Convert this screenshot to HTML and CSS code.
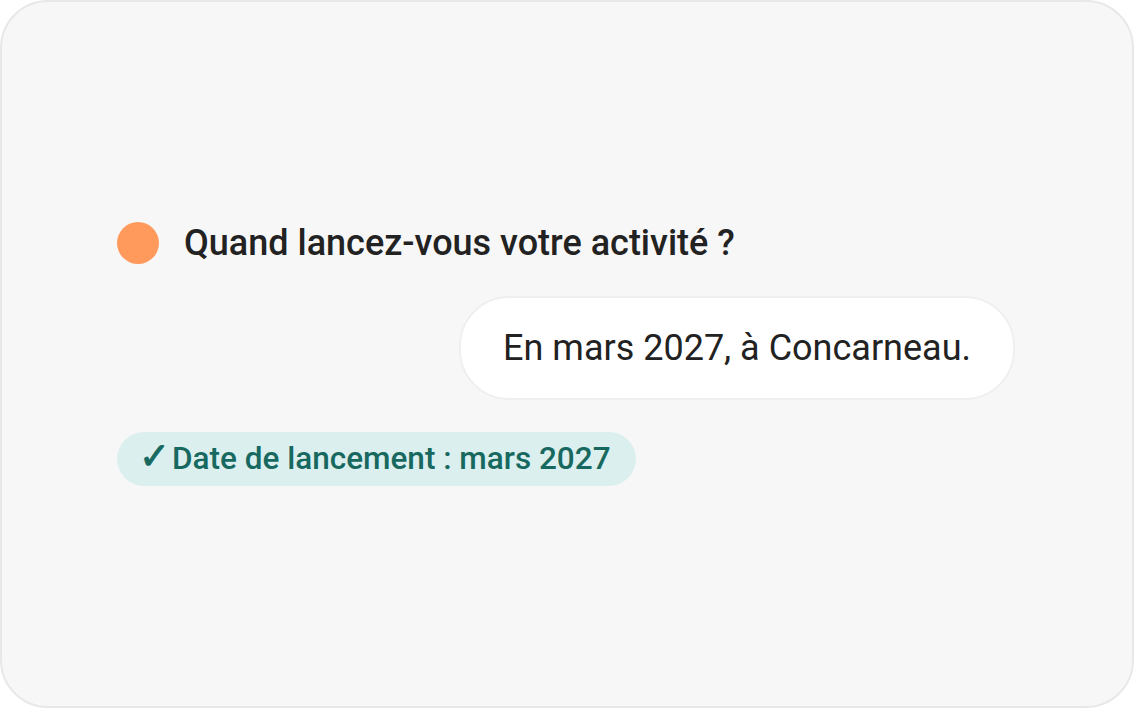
FILE: index.html
```html
<!DOCTYPE html>
<html lang="fr">
<head>
  <meta charset="UTF-8" />
  <meta name="viewport" content="width=device-width, initial-scale=1.0"/>
  <title>Date de lancement</title>
  <link rel="stylesheet" href="styles.css">
</head>
<body>
  <div class="card">
    <div class="question">
      <span class="dot"></span>
      <span class="question-text">Quand lancez-vous votre activité ?</span>
    </div>

    <div class="reply">En mars 2027, à Concarneau.</div>

    <div class="tag"><span class="check">✓</span>Date de lancement : mars 2027</div>
  </div>
</body>
</html>
```

FILE: styles.css
```css
html, body {
  margin: 0;
  background: #fff;
}

body {
  font-family: Roboto, "Noto Sans", sans-serif;
}

.card {
  box-sizing: border-box;
  width: 1134px;
  height: 708px;
  background: #f7f7f7;
  border: 2px solid #e8e8e8;
  border-radius: 48px;
  padding: 0 117px 0 115px;
  display: flex;
  flex-direction: column;
  justify-content: center;
  gap: 32px;
}

.question {
  display: flex;
  align-items: center;
  gap: 25px;
  height: 42px;
}

.dot {
  width: 42px;
  height: 42px;
  border-radius: 50%;
  background: #ff9a5c;
  flex: none;
}

.question-text {
  font-size: 36px;
  font-weight: 500;
  color: #222;
}

.reply {
  align-self: flex-end;
  background: #fff;
  border: 2px solid #efefef;
  border-radius: 50px;
  padding: 29px 42px;
  font-size: 36px;
  line-height: 42px;
  color: #222;
}

.tag {
  align-self: flex-start;
  background: #dcefef;
  color: #17695f;
  border-radius: 27px;
  padding: 0 25px 0 22px;
  height: 54px;
  line-height: 54px;
  font-size: 31.5px;
  font-weight: 500;
}

.check {
  display: inline-block;
  width: 33px;
  line-height: 1;
  font-family: "DejaVu Sans", sans-serif;
  font-size: 37px;
  -webkit-text-stroke: 1px #17695f;
}
```
